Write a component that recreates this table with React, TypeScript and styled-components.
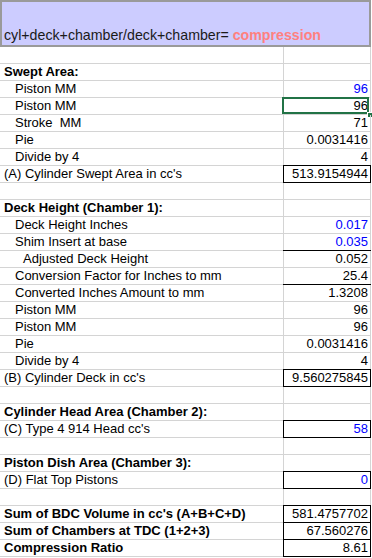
import React from 'react';
import styled, { createGlobalStyle } from 'styled-components';

type Row = {
  label?: string;
  value?: string;
  indent?: 0 | 1 | 2;
  bold?: boolean;
  blue?: boolean;
  boxed?: boolean;
  topRule?: boolean;
  selected?: boolean;
};

const rows: Row[] = [
  {},
  { label: 'Swept Area:', bold: true },
  { label: 'Piston MM', value: '96', indent: 1, blue: true },
  { label: 'Piston MM', value: '96', indent: 1, selected: true },
  { label: 'Stroke  MM', value: '71', indent: 1 },
  { label: 'Pie', value: '0.0031416', indent: 1 },
  { label: 'Divide by 4', value: '4', indent: 1 },
  { label: "(A) Cylinder Swept Area in cc's", value: '513.9154944', boxed: true },
  {},
  { label: 'Deck Height (Chamber 1):', bold: true },
  { label: 'Deck Height Inches', value: '0.017', indent: 1, blue: true },
  { label: 'Shim Insert at base', value: '0.035', indent: 1, blue: true },
  { label: 'Adjusted Deck Height', value: '0.052', indent: 2, topRule: true },
  { label: 'Conversion Factor for Inches to mm', value: '25.4', indent: 1 },
  { label: 'Converted Inches Amount to mm', value: '1.3208', indent: 1, topRule: true },
  { label: 'Piston MM', value: '96', indent: 1 },
  { label: 'Piston MM', value: '96', indent: 1 },
  { label: 'Pie', value: '0.0031416', indent: 1 },
  { label: 'Divide by 4', value: '4', indent: 1 },
  { label: "(B) Cylinder Deck in cc's", value: '9.560275845', boxed: true },
  {},
  { label: 'Cylinder Head Area (Chamber 2):', bold: true },
  { label: "(C) Type 4 914 Head cc's", value: '58', blue: true, boxed: true },
  {},
  { label: 'Piston Dish Area (Chamber 3):', bold: true },
  { label: '(D) Flat Top Pistons', value: '0', blue: true, boxed: true },
  {},
  { label: "Sum of BDC Volume in cc's (A+B+C+D)", value: '581.4757702', bold: true, boxed: true },
  { label: 'Sum of Chambers at TDC (1+2+3)', value: '67.560276', bold: true, boxed: true },
  { label: 'Compression Ratio', value: '8.61', bold: true, boxed: true },
];

const indents = [4, 15, 23];

const GlobalStyle = createGlobalStyle`
  html, body {
    margin: 0;
    padding: 0;
    background: #ffffff;
  }
  body {
    font-family: "Liberation Sans", Arial, sans-serif;
    color: #000;
  }
`;

const Sheet = styled.div`
  width: 371px;
`;

const Header = styled.div`
  box-sizing: border-box;
  height: 47px;
  background: #ccccff;
  border: 2px solid #9a9a9a;
  display: flex;
  align-items: flex-end;
  padding: 0 0 2px 2px;
  font-size: 14.2px;
  line-height: 16px;
  color: #1a1a1a;
  white-space: pre;
`;

const Accent = styled.span`
  color: #ff8080;
  font-weight: bold;
`;

const Line = styled.div`
  display: grid;
  grid-template-columns: 284px 87px;
  height: 17px;
`;

const Label = styled.div<{ $indent: number; $bold?: boolean }>`
  box-sizing: border-box;
  border-right: 1px solid #d4d4d4;
  border-bottom: 1px solid #d4d4d4;
  padding-left: ${(p) => p.$indent}px;
  font-size: 13px;
  line-height: 16px;
  font-weight: ${(p) => (p.$bold ? 'bold' : 'normal')};
  white-space: pre;
  overflow: hidden;
`;

const Value = styled.div<{ $blue?: boolean; $boxed?: boolean; $topRule?: boolean }>`
  position: relative;
  box-sizing: border-box;
  border-right: 1px solid #d4d4d4;
  border-bottom: 1px solid #d4d4d4;
  padding-right: 2px;
  text-align: right;
  font-size: 13px;
  line-height: 16px;
  color: ${(p) => (p.$blue ? '#0000ff' : '#000')};
  white-space: pre;

  ${(p) =>
    p.$boxed &&
    `
    &::after {
      content: '';
      position: absolute;
      top: -1px;
      left: -1px;
      right: -1px;
      bottom: -1px;
      border: 1px solid #000;
      pointer-events: none;
    }
  `}

  ${(p) =>
    p.$topRule &&
    `
    &::before {
      content: '';
      position: absolute;
      top: -1px;
      left: -1px;
      right: -1px;
      height: 1px;
      background: #000;
    }
  `}
`;

const Selection = styled.span`
  position: absolute;
  top: -1px;
  left: -2px;
  right: 1px;
  bottom: 0;
  border: 2px solid #217346;
  pointer-events: none;
`;

const Handle = styled.span`
  position: absolute;
  right: -2px;
  bottom: -3px;
  width: 4px;
  height: 4px;
  background: #217346;
  border: 1px solid #fff;
  border-right: none;
  border-bottom: none;
`;

export default function App() {
  return (
    <>
      <GlobalStyle />
      <Sheet>
        <Header>
          cyl+deck+chamber/deck+chamber= <Accent>compression</Accent>
        </Header>
        {rows.map((r, i) => (
          <Line key={i}>
            <Label $indent={indents[r.indent ?? 0]} $bold={r.bold}>
              {r.label}
            </Label>
            <Value $blue={r.blue} $boxed={r.boxed} $topRule={r.topRule}>
              {r.value}
              {r.selected && (
                <>
                  <Selection />
                  <Handle />
                </>
              )}
            </Value>
          </Line>
        ))}
      </Sheet>
    </>
  );
}
